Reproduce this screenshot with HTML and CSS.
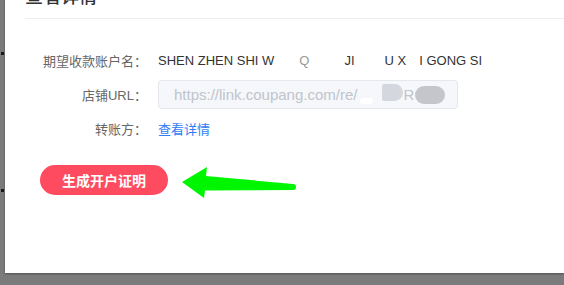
FILE: index.html
```html
<!DOCTYPE html>
<html lang="zh-CN">
<head>
<meta charset="utf-8">
<title>查看详情</title>
<link rel="stylesheet" href="styles.css">
</head>
<body>
<div class="page">
  <div class="strip">
    <span class="tick tick-a"></span>
    <span class="tick tick-b"></span>
  </div>
  <div class="modal">
    <div class="modal-header">
      <h2 class="modal-title">查看详情</h2>
    </div>
    <div class="modal-body">
      <div class="form">
        <div class="row">
          <div class="label">期望收款账户名：</div>
          <div class="value name">
            <span>SHEN ZHEN SHI W</span><span class="part p1">Q</span><span class="part p2">JI</span><span class="part p3">U X</span><span class="part p4">I GONG SI</span>
          </div>
        </div>
        <div class="row">
          <div class="label">店铺URL：</div>
          <div class="input">
            <span class="url">https://link.coupang.com/re/</span><span class="blob blob-w"></span><span class="blob blob-g1"></span><span class="url r">R</span><span class="blob blob-g2"></span>
          </div>
        </div>
        <div class="row">
          <div class="label">转账方：</div>
          <a class="link" href="#">查看详情</a>
        </div>
      </div>
      <div class="actions">
        <button class="btn" type="button">生成开户证明</button>
        <svg class="arrow" width="116" height="34" viewBox="0 0 116 34" aria-hidden="true">
          <polygon points="1,16 26,1 25,10 112,18 112,24 24,24.5 23,32" fill="#00f500"/>
          <circle cx="112" cy="21" r="3" fill="#00f500"/>
        </svg>
      </div>
    </div>
  </div>
</div>
</body>
</html>
```
FILE: styles.css
```css
html, body {
  margin: 0;
  padding: 0;
}
body {
  background: #7b7b7b;
  font-family: "Liberation Sans", "Noto Sans CJK SC", sans-serif;
  width: 564px;
  height: 285px;
  overflow: hidden;
}
.page {
  display: flex;
  align-items: flex-start;
}
.strip {
  width: 5px;
  height: 285px;
  flex: none;
  display: flex;
  flex-direction: column;
}
.tick {
  display: block;
  width: 3px;
  height: 3px;
  background: #1a1a1a;
  margin-left: 1px;
}
.tick-a { margin-top: 52px; }
.tick-b { margin-top: 134px; }
.modal {
  flex: none;
  width: 559px;
  height: 288px;
  margin-top: -15px;
  background: #fff;
  box-shadow: 0 1px 2px rgba(0, 0, 0, 0.35);
}
.modal-header {
  margin-left: 20px;
  padding-bottom: 9px;
  border-bottom: 1px solid #eeeeee;
}
.modal-title {
  margin: 0;
  font-size: 18px;
  line-height: 24px;
  font-weight: 500;
  color: #303133;
}
.modal-body {
  padding: 26px 0 0 20px;
}
.form {
  display: flex;
  flex-direction: column;
  gap: 4px;
}
.row {
  display: flex;
  align-items: center;
  height: 30px;
}
.label {
  width: 122px;
  margin-right: 11px;
  text-align: right;
  font-size: 13px;
  color: #666;
  white-space: nowrap;
  flex: none;
}
.value {
  font-size: 13px;
  color: #333;
  white-space: nowrap;
}
.part { display: inline-block; }
.p1 { margin-left: 25px; color: #999; }
.p2 { margin-left: 35px; }
.p3 { margin-left: 30px; }
.p4 { margin-left: 13px; }
.input {
  box-sizing: border-box;
  width: 300px;
  height: 29px;
  border: 1px solid #e4e7ed;
  border-radius: 4px;
  background: #f5f7fa;
  display: flex;
  align-items: center;
  padding-left: 15px;
  font-size: 15px;
  color: #c0c4cc;
  white-space: nowrap;
}
.blob {
  display: inline-block;
  flex: none;
}
.blob-w {
  width: 13px;
  height: 6px;
  background: #fff;
  border-radius: 3px;
  margin: 14px 0 0 3px;
}
.blob-g1 {
  width: 21px;
  height: 17px;
  background: #d4d7de;
  border-radius: 2px 9px 9px 2px;
  margin: -4px 0 0 9px;
}
.url.r {
  margin-left: 0;
}
.blob-g2 {
  width: 30px;
  height: 18px;
  background: #c4c6cc;
  border-radius: 9px;
  margin: 1px 0 0 1px;
}
.link {
  font-size: 13px;
  color: #2f7cf4;
  text-decoration: none;
}
.actions {
  display: flex;
  align-items: flex-start;
  margin-top: 22px;
  margin-left: 15px;
}
.btn {
  width: 128px;
  height: 30px;
  border: none;
  border-radius: 15px;
  background: #fe4b5f;
  color: #fff;
  font-family: "Liberation Sans", "Noto Sans CJK SC", sans-serif;
  font-size: 14px;
  font-weight: 700;
  padding: 0;
}
.arrow {
  display: block;
  margin-left: 13px;
  margin-top: 1px;
}
```
